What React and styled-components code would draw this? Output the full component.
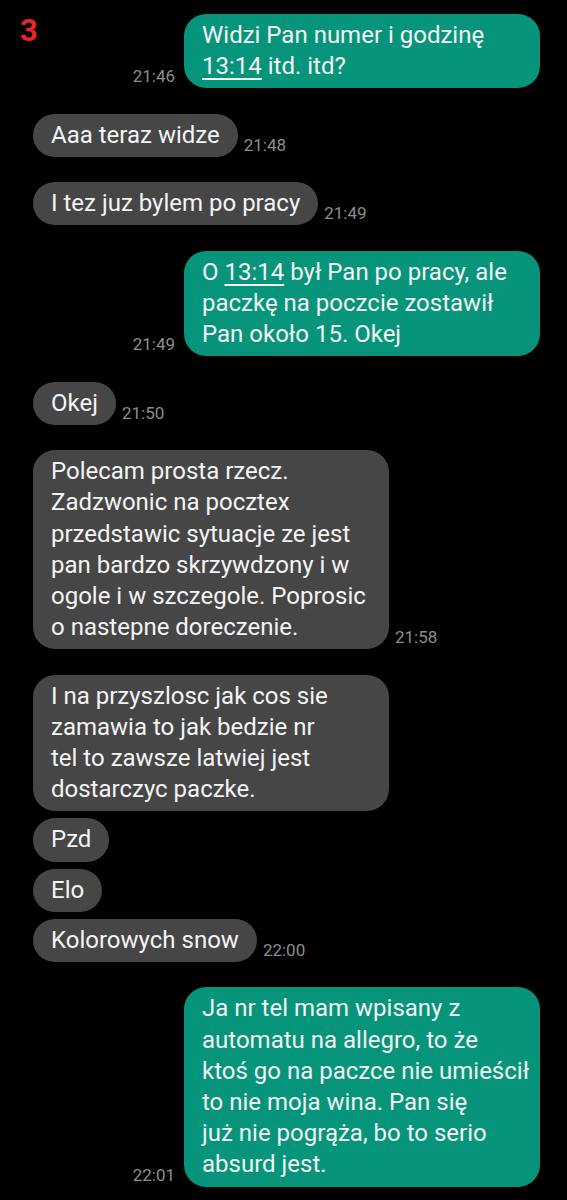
import React from "react";
import styled, { createGlobalStyle } from "styled-components";

const GlobalStyle = createGlobalStyle`
  html, body {
    margin: 0;
    padding: 0;
    background: #000;
  }
  body {
    font-family: Roboto, "Noto Sans", "Liberation Sans", sans-serif;
  }
`;

const Screen = styled.div`
  position: relative;
  width: 567px;
  min-height: 1200px;
  background: #000;
  padding-top: 14px;
  box-sizing: border-box;
  display: flex;
  flex-direction: column;
`;

const PageMark = styled.div`
  position: absolute;
  left: 20px;
  top: 13px;
  font-size: 31px;
  font-weight: 700;
  color: #ee2526;
  line-height: 36px;
`;

const Row = styled.div`
  display: flex;
  align-items: flex-end;
  justify-content: ${(p) => (p.$mine ? "flex-end" : "flex-start")};
  flex-direction: ${(p) => (p.$mine ? "row" : "row")};
  gap: ${(p) => (p.$mine ? "9px" : "6px")};
  padding: ${(p) => (p.$mine ? "0 27px 0 0" : "0 0 0 33px")};
  margin-top: ${(p) => (p.$first ? "0" : p.$grouped ? "7px" : "25.3px")};
`;

const Bubble = styled.div`
  background: ${(p) => (p.$mine ? "#06957a" : "#464646")};
  color: #f4f4f4;
  font-size: 24px;
  line-height: 31.2px;
  padding: 6px 18px;
  border-radius: 22px;
  white-space: nowrap;
  box-sizing: border-box;
  ${(p) => p.$wide && "width: 356px;"}
`;

const Time = styled.span`
  font-size: 17px;
  line-height: 16px;
  color: #8d8d8d;
  margin-bottom: 4px;
  white-space: nowrap;
`;

const Link = styled.span`
  text-decoration: underline;
  text-decoration-thickness: 1.5px;
  text-underline-offset: 4px;
`;

const messages = [
  {
    mine: true,
    time: "21:46",
    lines: [
      "Widzi Pan numer i godzinę",
      <>
        <Link>13:14</Link> itd. itd?
      </>,
    ],
  },
  { time: "21:48", lines: ["Aaa teraz widze"] },
  { time: "21:49", lines: ["I tez juz bylem po pracy"] },
  {
    mine: true,
    time: "21:49",
    lines: [
      <>
        O <Link>13:14</Link> był Pan po pracy, ale
      </>,
      "paczkę na poczcie zostawił",
      "Pan około 15. Okej",
    ],
  },
  { time: "21:50", lines: ["Okej"] },
  {
    time: "21:58",
    lines: [
      "Polecam prosta rzecz.",
      "Zadzwonic na pocztex",
      "przedstawic sytuacje ze jest",
      "pan bardzo skrzywdzony i w",
      "ogole i w szczegole. Poprosic",
      "o nastepne doreczenie.",
    ],
  },
  {
    lines: [
      "I na przyszlosc jak cos sie",
      "zamawia to jak bedzie nr",
      "tel to zawsze latwiej jest",
      "dostarczyc paczke.",
    ],
  },
  { grouped: true, lines: ["Pzd"] },
  { grouped: true, lines: ["Elo"] },
  { grouped: true, time: "22:00", lines: ["Kolorowych snow"] },
  {
    mine: true,
    time: "22:01",
    lines: [
      "Ja nr tel mam wpisany z",
      "automatu na allegro, to że",
      "ktoś go na paczce nie umieścił",
      "to nie moja wina. Pan się",
      "już nie pogrąża, bo to serio",
      "absurd jest.",
    ],
  },
];

const Message = ({ msg, first }) => {
  const bubble = (
    <Bubble $mine={msg.mine} $wide={msg.lines.length > 1}>
      {msg.lines.map((line, i) => (
        <React.Fragment key={i}>
          {i > 0 && <br />}
          {line}
        </React.Fragment>
      ))}
    </Bubble>
  );
  const time = msg.time ? <Time>{msg.time}</Time> : null;

  return (
    <Row $mine={msg.mine} $first={first} $grouped={msg.grouped}>
      {msg.mine ? (
        <>
          {time}
          {bubble}
        </>
      ) : (
        <>
          {bubble}
          {time}
        </>
      )}
    </Row>
  );
};

export default function App() {
  return (
    <>
      <GlobalStyle />
      <Screen>
        <PageMark>3</PageMark>
        {messages.map((m, i) => (
          <Message key={i} msg={m} first={i === 0} />
        ))}
      </Screen>
    </>
  );
}
